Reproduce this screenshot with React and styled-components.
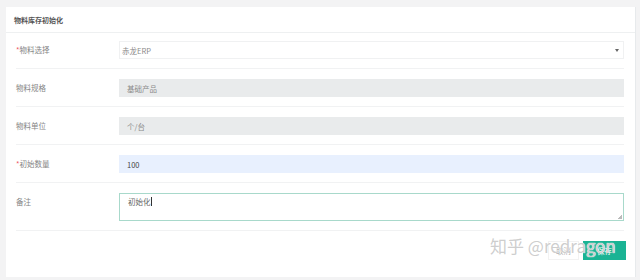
import styled, { createGlobalStyle } from 'styled-components'

const GlobalStyle = createGlobalStyle`
  body {
    margin: 0;
    background: #f3f3f4;
    font-family: "Noto Sans CJK SC", "Noto Sans", sans-serif;
    color: #676a6c;
  }
`;

const Card = styled.div`
  position: relative;
  margin: 7px 4px 0 6px;
  height: 270px;
  background: #fff;
  border-right: 1px solid #e7eaec;
  box-sizing: border-box;
`;

const CardTitle = styled.div`
  height: 25px;
  padding: 0 8px;
  display: flex;
  align-items: center;
  border-bottom: 1px solid #eef0f1;
  font-size: 7px;
  font-weight: 700;
  color: #555;
`;

const Body = styled.div`
  padding: 0 11px 0 10px;
`;

const Row = styled.div`
  display: grid;
  grid-template-columns: 103px 1fr;
  align-items: start;
  padding: ${({ first }) => (first ? '8px 0 9px' : '10px 0 9px')};
  border-bottom: 1px solid #f1f2f3;
`;

const Label = styled.div`
  line-height: 18px;
  font-size: 7.5px;
  color: #858585;
`;

const Star = styled.span`
  color: #ed5565;
`;

const Select = styled.div`
  height: 18px;
  display: flex;
  align-items: center;
  justify-content: space-between;
  padding: 0 4px 0 2px;
  border: 1px solid #f0f1f2;
  box-sizing: border-box;
  font-size: 7.5px;
  color: #8a8a8a;
`;

const Caret = styled.span`
  width: 0;
  height: 0;
  border-left: 2.5px solid transparent;
  border-right: 2.5px solid transparent;
  border-top: 3px solid #666;
`;

const Input = styled.div`
  height: 18px;
  display: flex;
  align-items: center;
  padding: 0 8px;
  box-sizing: border-box;
  font-size: 7.5px;
  background: ${({ tone }) => (tone === 'blue' ? '#e8f0fe' : '#e9ebec')};
  color: ${({ tone }) => (tone === 'blue' ? '#444' : '#8a8a8a')};
`;

const TextArea = styled.div`
  position: relative;
  height: 28px;
  padding: 0 8px;
  box-sizing: border-box;
  border: 1px solid #a8d9cb;
  font-size: 7.5px;
  line-height: 16px;
  color: #666;
`;

const Cursor = styled.span`
  display: inline-block;
  width: 1px;
  height: 9px;
  vertical-align: -1px;
  background: #333;
`;

const Grip = styled.span`
  position: absolute;
  right: 1px;
  bottom: 1px;
  width: 4px;
  height: 4px;
  background: linear-gradient(135deg, transparent 50%, #bbb 50%);
`;

const Footer = styled.div`
  position: relative;
  display: flex;
  justify-content: flex-end;
  gap: 4px;
  padding: 10px 9px 0 0;
`;

const Button = styled.div`
  height: 19px;
  padding: 0 ${({ primary }) => (primary ? '13px' : '7px')};
  display: flex;
  align-items: center;
  font-size: 7.5px;
  box-sizing: border-box;
  background: ${({ primary }) => (primary ? '#1ab394' : '#fff')};
  color: ${({ primary }) => (primary ? '#fff' : '#aaa')};
  border: 1px solid ${({ primary }) => (primary ? '#1ab394' : '#f2f2f2')};
`;

const Watermark = styled.div`
  position: absolute;
  left: 484px;
  top: 2px;
  font-family: "Noto Sans CJK SC", "Noto Sans", sans-serif;
  font-size: 17px;
  color: rgba(200, 200, 200, 0.9);
  text-shadow: 0 0 1px #fff, 0 0 1px #fff;
  white-space: nowrap;
  pointer-events: none;
`;

const rows = [
  { label: '物料规格', value: '基础产品' },
  { label: '物料单位', value: '个/台' },
];

export default function App() {
  return (
    <>
      <GlobalStyle />
      <Card>
        <CardTitle>物料库存初始化</CardTitle>
        <Body>
          <Row first>
            <Label><Star>*</Star>物料选择</Label>
            <Select>
              <span>赤龙ERP</span>
              <Caret />
            </Select>
          </Row>
          {rows.map((r) => (
            <Row key={r.label}>
              <Label>{r.label}</Label>
              <Input>{r.value}</Input>
            </Row>
          ))}
          <Row>
            <Label><Star>*</Star>初始数量</Label>
            <Input tone="blue">100</Input>
          </Row>
          <Row>
            <Label>备注</Label>
            <TextArea>
              初始化<Cursor />
              <Grip />
            </TextArea>
          </Row>
        </Body>
        <Footer>
          <Button>取消</Button>
          <Button primary>保存</Button>
          <Watermark>知乎 @redragon</Watermark>
        </Footer>
      </Card>
    </>
  )
}
